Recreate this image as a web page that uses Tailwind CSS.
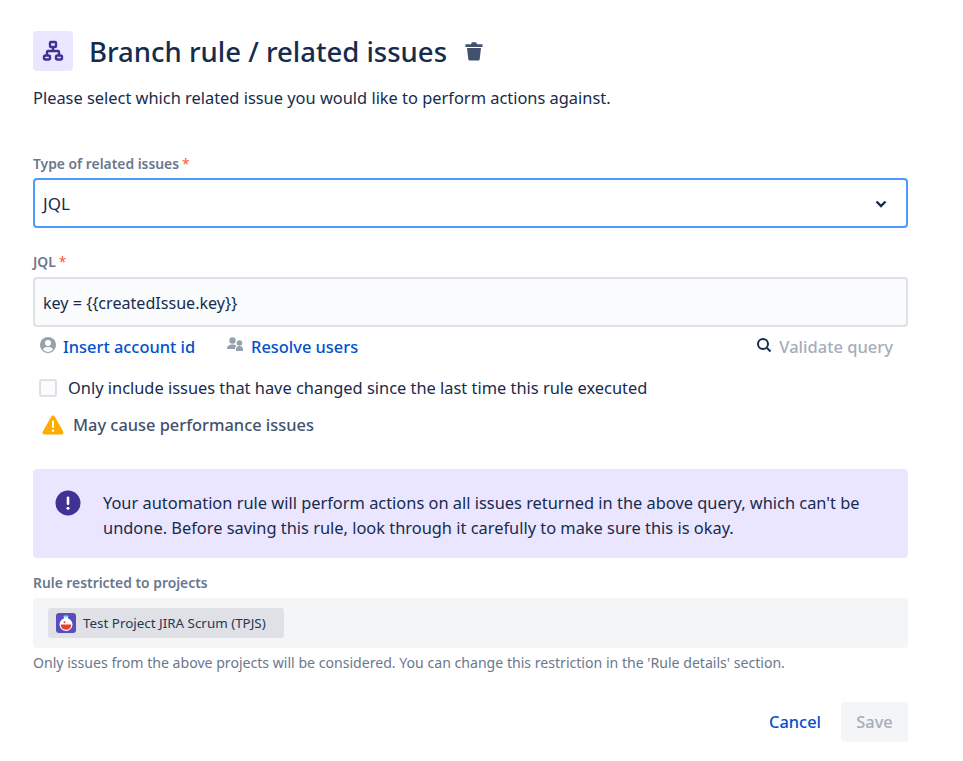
<!DOCTYPE html>
<html lang="en">
<head>
    <meta charset="UTF-8" />
    <title>Branch rule</title>
    <script src="https://cdn.jsdelivr.net/npm/@tailwindcss/browser@4"></script>
</head>
<body class="bg-white font-['Noto_Sans',sans-serif] text-[#172b4d] text-[16.4px] leading-5">
    <div class="w-[875px] ml-[33px] pt-[31px]">

        <!-- Heading -->
        <div class="flex items-center h-10">
            <div class="w-10 h-10 rounded bg-[#eae6ff] flex items-center justify-center">
                <svg width="24" height="24" viewBox="0 0 24 24" fill="none" stroke="#403294" stroke-width="2.400">
                    <rect x="9" y="3" width="6" height="5" rx="1" />
                    <path d="M12 8v4M6 16v-3a1 1 0 0 1 1-1h10a1 1 0 0 1 1 1v3" />
                    <rect x="3" y="16.500" width="6" height="4" rx="1.500" />
                    <rect x="15" y="16.500" width="6" height="4" rx="1.500" />
                </svg>
            </div>
            <h1 class="ml-4 mt-[2px] text-[27.500px] leading-8 font-medium">Branch rule / related issues</h1>
            <svg class="ml-[17px]" width="20" height="22" viewBox="0 0 20 22" fill="#42526e">
                <path d="M1.500 4.200h17v2.800h-17zM7 4.500 7.800 2.300h4.400L13 4.500z" />
                <path d="M3 8h14l-1.300 11.200a1.500 1.500 0 0 1-1.500 1.300H5.800a1.500 1.500 0 0 1-1.500-1.300z" />
            </svg>
        </div>
        <p class="mt-4 leading-[22px]">Please select which related issue you would like to perform actions against.</p>

        <!-- Type of related issues -->
        <label class="block mt-[47px] text-[13.850px] leading-4 font-semibold text-[#6b778c]">Type of related issues<span class="text-[#ff5630] font-normal ml-[3px]">*</span></label>
        <div class="mt-[6px] h-[50px] pt-[2px] border-2 border-[#4c9aff] rounded flex items-center justify-between pl-2 pr-[19px]">
            <span class="text-[17px]">JQL</span>
            <svg width="12" height="8" viewBox="0 0 12 8" fill="none" stroke="#172b4d" stroke-width="2.400"><path d="M1.500 1.500 6 6l4.500-4.500" /></svg>
        </div>

        <!-- JQL -->
        <label class="block mt-[26px] text-[13.850px] leading-4 font-semibold text-[#6b778c]">JQL<span class="text-[#ff5630] font-normal ml-[3px]">*</span></label>
        <div class="mt-[7px] h-[50px] pt-[2px] border-2 border-[#dfe1e6] rounded bg-[#fafbfc] flex items-center pl-2">
            <span class="text-[16.100px]">key = {{createdIssue.key}}</span>
        </div>

        <!-- Query actions -->
        <div class="flex items-center justify-between h-10 pl-[6px] pr-[15px]">
            <div class="flex items-center">
                <svg width="18" height="18" viewBox="0 0 18 18" class="mb-1">
                    <circle cx="9" cy="9" r="8" fill="#97a0af" />
                    <circle cx="9" cy="7" r="3" fill="#fff" />
                    <path d="M3.800 13.500c1-2 3-2.500 5.200-2.500s4.200.500 5.200 2.500A7 7 0 0 1 9 16a7 7 0 0 1-5.200-2.500z" fill="#fff" />
                </svg>
                <a class="ml-[6px] font-medium text-[#0052cc]">Insert account id</a>
                <svg class="ml-[31px] mb-1" width="20" height="18" viewBox="0 0 20 18" fill="#97a0af">
                    <circle cx="6.500" cy="4.500" r="3.200" /><circle cx="13.500" cy="7" r="2.800" />
                    <path d="M1 12.500c0-2.500 2.500-4 5.500-4 1.500 0 3 .4 4 1.200-1 .8-1.500 1.800-1.500 2.800v.5H1zM10 15v-2c0-1.700 1.800-3 3.500-3s3.500 1.300 3.500 3v2z" />
                </svg>
                <a class="ml-[5px] font-medium text-[#0052cc]">Resolve users</a>
            </div>
            <div class="flex items-center">
                <svg class="mb-1" width="18" height="18" viewBox="0 0 18 18" fill="none" stroke="#172b4d" stroke-width="2"><circle cx="8" cy="8" r="5" /><path d="m12 12 3.500 3.500" /></svg>
                <span class="ml-[6px] text-[16.500px] font-medium text-[#a5adba]">Validate query</span>
            </div>
        </div>

        <!-- Checkbox -->
        <div class="flex items-center mt-[9px] h-6 pl-[6px]">
            <span class="w-[18px] h-[18px] rounded-[3px] border-2 border-[#dfe1e6] bg-[#fafbfc]"></span>
            <span class="ml-[11px]">Only include issues that have changed since the last time this rule executed</span>
        </div>

        <!-- Warning -->
        <div class="flex items-center mt-[13px] h-6 pl-[9px]">
            <svg width="22" height="20" viewBox="0 0 22 20">
                <path d="M9.300 1.500a2 2 0 0 1 3.400 0l8.500 15a2 2 0 0 1-1.700 3H2.500a2 2 0 0 1-1.700-3z" fill="#ffab00" />
                <rect x="10" y="5.500" width="2" height="7.500" rx="1" fill="#fff" /><circle cx="11" cy="15.700" r="1.300" fill="#fff" />
            </svg>
            <span class="ml-[9px] font-medium text-[#42526e]">May cause performance issues</span>
        </div>

        <!-- Info panel -->
        <div class="mt-[32px] h-[89px] rounded bg-[#eae6ff] flex pl-[22px] pr-4 pt-[21px]">
            <svg class="shrink-0" width="26" height="26" viewBox="0 0 26 26">
                <circle cx="13" cy="13" r="12.500" fill="#403294" />
                <rect x="11.700" y="6.500" width="2.600" height="8.500" rx="1.300" fill="#fff" /><circle cx="13" cy="18.200" r="1.500" fill="#fff" />
            </svg>
            <p class="ml-[22px] leading-[25px]">Your automation rule will perform actions on all issues returned in the above query, which can't be undone. Before saving this rule, look through it carefully to make sure this is okay.</p>
        </div>

        <!-- Restricted projects -->
        <label class="block mt-[17px] text-[13.850px] leading-4 font-semibold text-[#6b778c]">Rule restricted to projects</label>
        <div class="mt-[7px] h-[50px] rounded bg-[#f4f5f7] flex items-center pl-[15px]">
            <div class="h-[30px] rounded-[3px] bg-[#dfe1e6] flex items-center pl-2 pr-[18px]">
                <svg width="20" height="20" viewBox="0 0 20 20">
                    <rect width="20" height="20" rx="3" fill="#5a4bc0" />
                    <circle cx="10" cy="11.500" r="6.500" fill="#fff" />
                    <path d="M8 3h4v4H8z" fill="#fff" />
                    <path d="M4.700 11.500h10.600a5.300 5.300 0 0 1-10.600 0z" fill="#e8412a" />
                    <circle cx="8.500" cy="9.300" r="1" fill="#e8412a" />
                    <rect x="7.500" y="2.500" width="5" height="2" rx="1" fill="#79e2f2" />
                </svg>
                <span class="ml-[7px] text-[13.400px] text-[#253858]">Test Project JIRA Scrum (TPJS)</span>
            </div>
        </div>
        <p class="mt-[7px] text-[14.100px] leading-4 text-[#6b778c]">Only issues from the above projects will be considered. You can change this restriction in the 'Rule details' section.</p>

        <!-- Footer -->
        <div class="flex justify-end items-center mt-[31px]">
            <a class="font-medium text-[#0052cc]">Cancel</a>
            <button class="ml-[20px] w-[67px] h-10 rounded bg-[#f4f5f7] font-medium text-[#a5adba]">Save</button>
        </div>
    </div>
</body>
</html>
